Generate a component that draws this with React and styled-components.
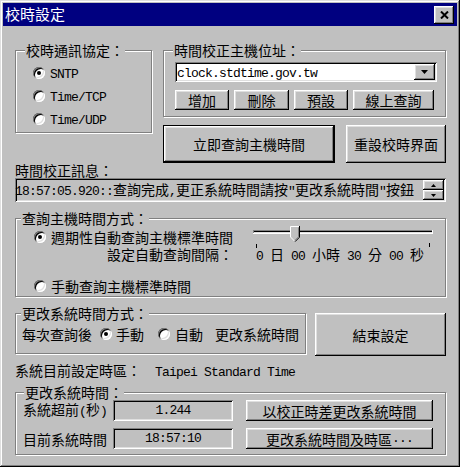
import React from 'react';
import styled, { createGlobalStyle, css } from 'styled-components';

const GlobalStyle = createGlobalStyle`
  html, body { margin: 0; padding: 0; background: #c0c0c0; }
  body {
    font-family: "Noto Sans CJK TC", "Liberation Sans", sans-serif;
    font-size: 14px;
    line-height: 16px;
    color: #000;
  }
  * { box-sizing: border-box; }
`;

const raised = css`
  box-shadow: inset -1px -1px #000, inset 1px 1px #fff, inset -2px -2px #808080, inset 2px 2px #dfdfdf;
`;
const sunken = css`
  box-shadow: inset 1px 1px #808080, inset -1px -1px #fff, inset 2px 2px #000, inset -2px -2px #dfdfdf;
`;

const Window = styled.div`
  width: 460px;
  height: 467px;
  padding: 3px;
  background: #c0c0c0;
  box-shadow: inset -1px -1px #000, inset 1px 1px #dfdfdf, inset -2px -2px #808080, inset 2px 2px #fff;
  display: flex;
  flex-direction: column;
`;

const TitleBar = styled.div`
  height: 23px;
  background: #000080;
  display: flex;
  align-items: center;
  justify-content: space-between;
  padding-left: 2px;
  flex-shrink: 0;
`;

const Title = styled.span`
  color: #fff;
  font-size: 15px;
  line-height: 18px;
  margin-top: -1px;
`;

const CloseButton = styled.button`
  width: 20px;
  height: 18px;
  margin-right: 3px;
  padding: 0 0 0 1px;
  border: none;
  background: #c0c0c0;
  ${raised};
  display: flex;
  align-items: center;
  justify-content: center;
`;

const Content = styled.div`
  flex: 1;
  display: flex;
  flex-direction: column;
  padding: 16px 11px 0 12px;
`;

const Mono = styled.span`
  font-family: "Liberation Mono", "DejaVu Sans Mono", monospace;
  font-size: 13px;
  letter-spacing: -0.8px;
`;

const GroupBox = styled.div`
  position: relative;
  margin-top: ${p => p.$mt ?? 8}px;
  border: 1px solid #808080;
  box-shadow: inset 1px 1px #fff, 1px 1px #fff;
  padding: ${p => p.$pad || '0'};
  ${p => p.$h && css`height: ${p.$h}px;`}
`;

const Caption = styled.span`
  position: absolute;
  top: -9px;
  left: ${p => p.$left}px;
  padding: 0 1px;
  background: #c0c0c0;
  line-height: 16px;
  white-space: nowrap;
`;

const TopRow = styled.div`
  display: grid;
  grid-template-columns: 137px 1fr;
  column-gap: 11px;
  align-items: start;
`;

const RightCol = styled.div`
  display: flex;
  flex-direction: column;
`;

const RadioList = styled.div`
  display: flex;
  flex-direction: column;
  gap: 7px;
`;

const RadioRow = styled.label`
  display: inline-flex;
  align-items: center;
  gap: ${p => p.$gap ?? 5}px;
  height: 16px;
  white-space: nowrap;
  flex-shrink: 0;
`;

const RadioCircle = styled.span`
  width: 12px;
  height: 12px;
  border-radius: 50%;
  background: #fff;
  flex-shrink: 0;
  ${sunken};
  display: inline-flex;
  align-items: center;
  justify-content: center;
  &::after {
    content: '';
    width: 4px;
    height: 4px;
    border-radius: 50%;
    background: ${p => (p.$checked ? '#000' : 'transparent')};
  }
`;

const Radio = ({ checked, children, gap }) => (
  <RadioRow $gap={gap}>
    <RadioCircle $checked={checked} />
    <span>{children}</span>
  </RadioRow>
);

const Combo = styled.div`
  height: 20px;
  background: #fff;
  ${sunken};
  padding: 2px;
  display: flex;
  align-items: center;
`;

const ComboText = styled.div`
  flex: 1;
  white-space: nowrap;
`;

const SmallButton = styled.div`
  width: ${p => p.$w}px;
  height: ${p => p.$h}px;
  background: #c0c0c0;
  ${raised};
  display: flex;
  align-items: center;
  justify-content: center;
  flex-shrink: 0;
`;

const ButtonRow = styled.div`
  display: flex;
  gap: 5px;
  margin-top: 8px;
`;

const Button = styled.button`
  font-family: "Noto Sans CJK TC", sans-serif;
  font-size: 14px;
  line-height: 16px;
  color: #000;
  background: #c0c0c0;
  border: none;
  margin: 0;
  padding: 0;
  width: ${p => (p.$w ? `${p.$w}px` : '100%')};
  height: ${p => p.$h}px;
  ${raised};
  display: flex;
  align-items: center;
  justify-content: center;
  white-space: nowrap;
  flex-shrink: 0;
  ${p => p.$default && css`border: 1px solid #000;`}
`;

const BigRow = styled.div`
  display: grid;
  grid-template-columns: 172px 1fr;
  column-gap: 11px;
  margin-top: 8px;
`;

const FieldLabel = styled.div`
  line-height: 15px;
`;

const MsgField = styled.div`
  height: 24px;
  background: #c0c0c0;
  ${sunken};
  padding: 2px 2px 2px 0;
  display: flex;
  align-items: center;
`;

const MsgText = styled.div`
  flex: 1;
  white-space: nowrap;
`;

const Spinner = styled.div`
  display: flex;
  flex-direction: column;
  width: 21px;
  margin-left: 3px;
`;

const SliderRow = styled.div`
  display: flex;
  align-items: center;
  height: 21px;
  padding-left: 18px;
`;

const SliderSvg = styled.svg`
  margin-left: 20px;
  margin-top: 1px;
  flex-shrink: 0;
  display: block;
`;

const IntervalRow = styled.div`
  display: flex;
  line-height: 14px;
  padding-left: 91px;
  white-space: nowrap;
`;

const IntervalValue = styled.span`
  margin-left: 23px;
`;

const PlainRow = styled.div`
  display: flex;
  align-items: center;
  padding-left: ${p => p.$pl ?? 0}px;
  margin-top: ${p => p.$mt ?? 0}px;
  white-space: nowrap;
`;

const ModeRow = styled.div`
  display: grid;
  grid-template-columns: 291px 131px;
  column-gap: 9px;
  margin-top: 16px;
  align-items: start;
`;

const ModeContent = styled.div`
  height: 39px;
  display: flex;
  align-items: center;
  padding-left: 6px;
  white-space: nowrap;
`;

const Spacer = styled.span`
  display: inline-block;
  width: ${p => p.$w}px;
  flex-shrink: 0;
`;

const ZoneRow = styled.div`
  margin-top: 6px;
  line-height: 16px;
  display: flex;
  white-space: nowrap;
`;

const ZoneValue = styled.span`
  margin-left: 14px;
`;

const TimeRows = styled.div`
  display: flex;
  flex-direction: column;
  gap: 7px;
`;

const TimeRow = styled.div`
  display: flex;
  align-items: center;
  height: 21px;
`;

const TimeLabel = styled.span`
  width: 90px;
  flex-shrink: 0;
  white-space: nowrap;
`;

const ValueField = styled.div`
  width: 120px;
  height: 21px;
  background: #c0c0c0;
  ${sunken};
  display: flex;
  align-items: center;
  justify-content: center;
  flex-shrink: 0;
  margin-right: 13px;
`;

const DownArrow = ({ w = 5, h = 3 }) => (
  <svg width={w} height={h} viewBox={`0 0 ${w} ${h}`}>
    <polygon points={`0,0 ${w},0 ${w / 2},${h}`} fill="#000" />
  </svg>
);
const UpArrow = ({ w = 5, h = 3 }) => (
  <svg width={w} height={h} viewBox={`0 0 ${w} ${h}`}>
    <polygon points={`0,${h} ${w},${h} ${w / 2},0`} fill="#000" />
  </svg>
);

export default function App() {
  return (
    <>
      <GlobalStyle />
      <Window>
        <TitleBar>
          <Title>校時設定</Title>
          <CloseButton aria-label="close">
            <svg width="9" height="8" viewBox="0 0 9 8">
              <path d="M1 0.5 L8 7.5 M8 0.5 L1 7.5" stroke="#000" strokeWidth="2" />
            </svg>
          </CloseButton>
        </TitleBar>
        <Content>
          <TopRow>
            <GroupBox $mt={8} $pad="14px 0 5px 17px">
              <Caption $left={9}>校時通訊協定：</Caption>
              <RadioList>
                <Radio checked><Mono>SNTP</Mono></Radio>
                <Radio><Mono>Time/TCP</Mono></Radio>
                <Radio><Mono>Time/UDP</Mono></Radio>
              </RadioList>
            </GroupBox>
            <RightCol>
              <GroupBox $mt={8} $pad="11px 8px 6px 11px">
                <Caption $left={9}>時間校正主機位址：</Caption>
                <Combo>
                  <ComboText><Mono>clock.stdtime.gov.tw</Mono></ComboText>
                  <SmallButton $w={21} $h={16}><DownArrow w={7} h={4} /></SmallButton>
                </Combo>
                <ButtonRow>
                  <Button $w={54} $h={20}>增加</Button>
                  <Button $w={55} $h={20}>刪除</Button>
                  <Button $w={54} $h={20}>預設</Button>
                  <Button $w={81} $h={20}>線上查詢</Button>
                </ButtonRow>
              </GroupBox>
              <BigRow>
                <Button $h={38} $default>立即查詢主機時間</Button>
                <Button $h={38}>重設校時界面</Button>
              </BigRow>
            </RightCol>
          </TopRow>

          <FieldLabel>時間校正訊息：</FieldLabel>
          <MsgField>
            <MsgText>
              <Mono>18:57:05.920::</Mono>查詢完成<Mono>,</Mono>更正系統時間請按<Mono>"</Mono>更改系統時間<Mono>"</Mono>按鈕
            </MsgText>
            <Spinner>
              <SmallButton $w={21} $h={10}><UpArrow /></SmallButton>
              <SmallButton $w={21} $h={10}><DownArrow /></SmallButton>
            </Spinner>
          </MsgField>

          <GroupBox $mt={16} $pad="7px 0 2px 0">
            <Caption $left={5}>查詢主機時間方式：</Caption>
            <SliderRow>
              <Radio checked>週期性自動查詢主機標準時間</Radio>
              <SliderSvg width="180" height="22" viewBox="0 0 180 22">
                <rect x="0" y="4" width="180" height="1" fill="#808080" />
                <rect x="0" y="4" width="1" height="4" fill="#808080" />
                <rect x="1" y="5" width="178" height="1" fill="#000" />
                <rect x="1" y="6" width="178" height="1" fill="#dfdfdf" />
                <rect x="0" y="7" width="180" height="1" fill="#fff" />
                <rect x="179" y="4" width="1" height="4" fill="#fff" />
                <polygon points="37,0 47,0 47,11 42,16 37,11" fill="#c0c0c0" />
                <path d="M37.5 11 V0.5 H46.5" stroke="#fff" fill="none" />
                <path d="M37.5 11 L42 15.5" stroke="#fff" fill="none" />
                <path d="M46.5 0 V11.2 L42 15.7" stroke="#000" fill="none" />
                <path d="M45.5 1.5 V10.8 L42 14.3" stroke="#808080" fill="none" />
                <rect x="3" y="18" width="1" height="4" fill="#000" />
                <rect x="176" y="17" width="1" height="4" fill="#000" />
              </SliderSvg>
            </SliderRow>
            <IntervalRow>
              <span>設定自動查詢間隔：</span>
              <IntervalValue>
                <Mono>0 </Mono>日<Mono> 00 </Mono>小時<Mono> 30 </Mono>分<Mono> 00 </Mono>秒
              </IntervalValue>
            </IntervalRow>
            <PlainRow $pl={18} $mt={14}>
              <Radio>手動查詢主機標準時間</Radio>
            </PlainRow>
          </GroupBox>

          <ModeRow>
            <GroupBox $mt={0} $h={41}>
              <Caption $left={5}>更改系統時間方式：</Caption>
              <ModeContent>
                <span>每次查詢後</span>
                <Spacer $w={8} />
                <Radio checked gap={4}>手動</Radio>
                <Spacer $w={14} />
                <Radio gap={5}>自動</Radio>
                <Spacer $w={12} />
                <span>更改系統時間</span>
              </ModeContent>
            </GroupBox>
            <Button $h={43}>結束設定</Button>
          </ModeRow>

          <ZoneRow>
            <span>系統目前設定時區：</span>
            <ZoneValue><Mono>Taipei Standard Time</Mono></ZoneValue>
          </ZoneRow>

          <GroupBox $mt={11} $pad="7px 0 5px 7px">
            <Caption $left={8}>更改系統時間：</Caption>
            <TimeRows>
              <TimeRow>
                <TimeLabel>系統超前<Mono>(</Mono>秒<Mono>)</Mono></TimeLabel>
                <ValueField><Mono>1.244</Mono></ValueField>
                <Button $w={187} $h={21}>以校正時差更改系統時間</Button>
              </TimeRow>
              <TimeRow>
                <TimeLabel>目前系統時間</TimeLabel>
                <ValueField><Mono>18:57:10</Mono></ValueField>
                <Button $w={187} $h={21}>更改系統時間及時區<Mono>...</Mono></Button>
              </TimeRow>
            </TimeRows>
          </GroupBox>
        </Content>
      </Window>
    </>
  );
}
